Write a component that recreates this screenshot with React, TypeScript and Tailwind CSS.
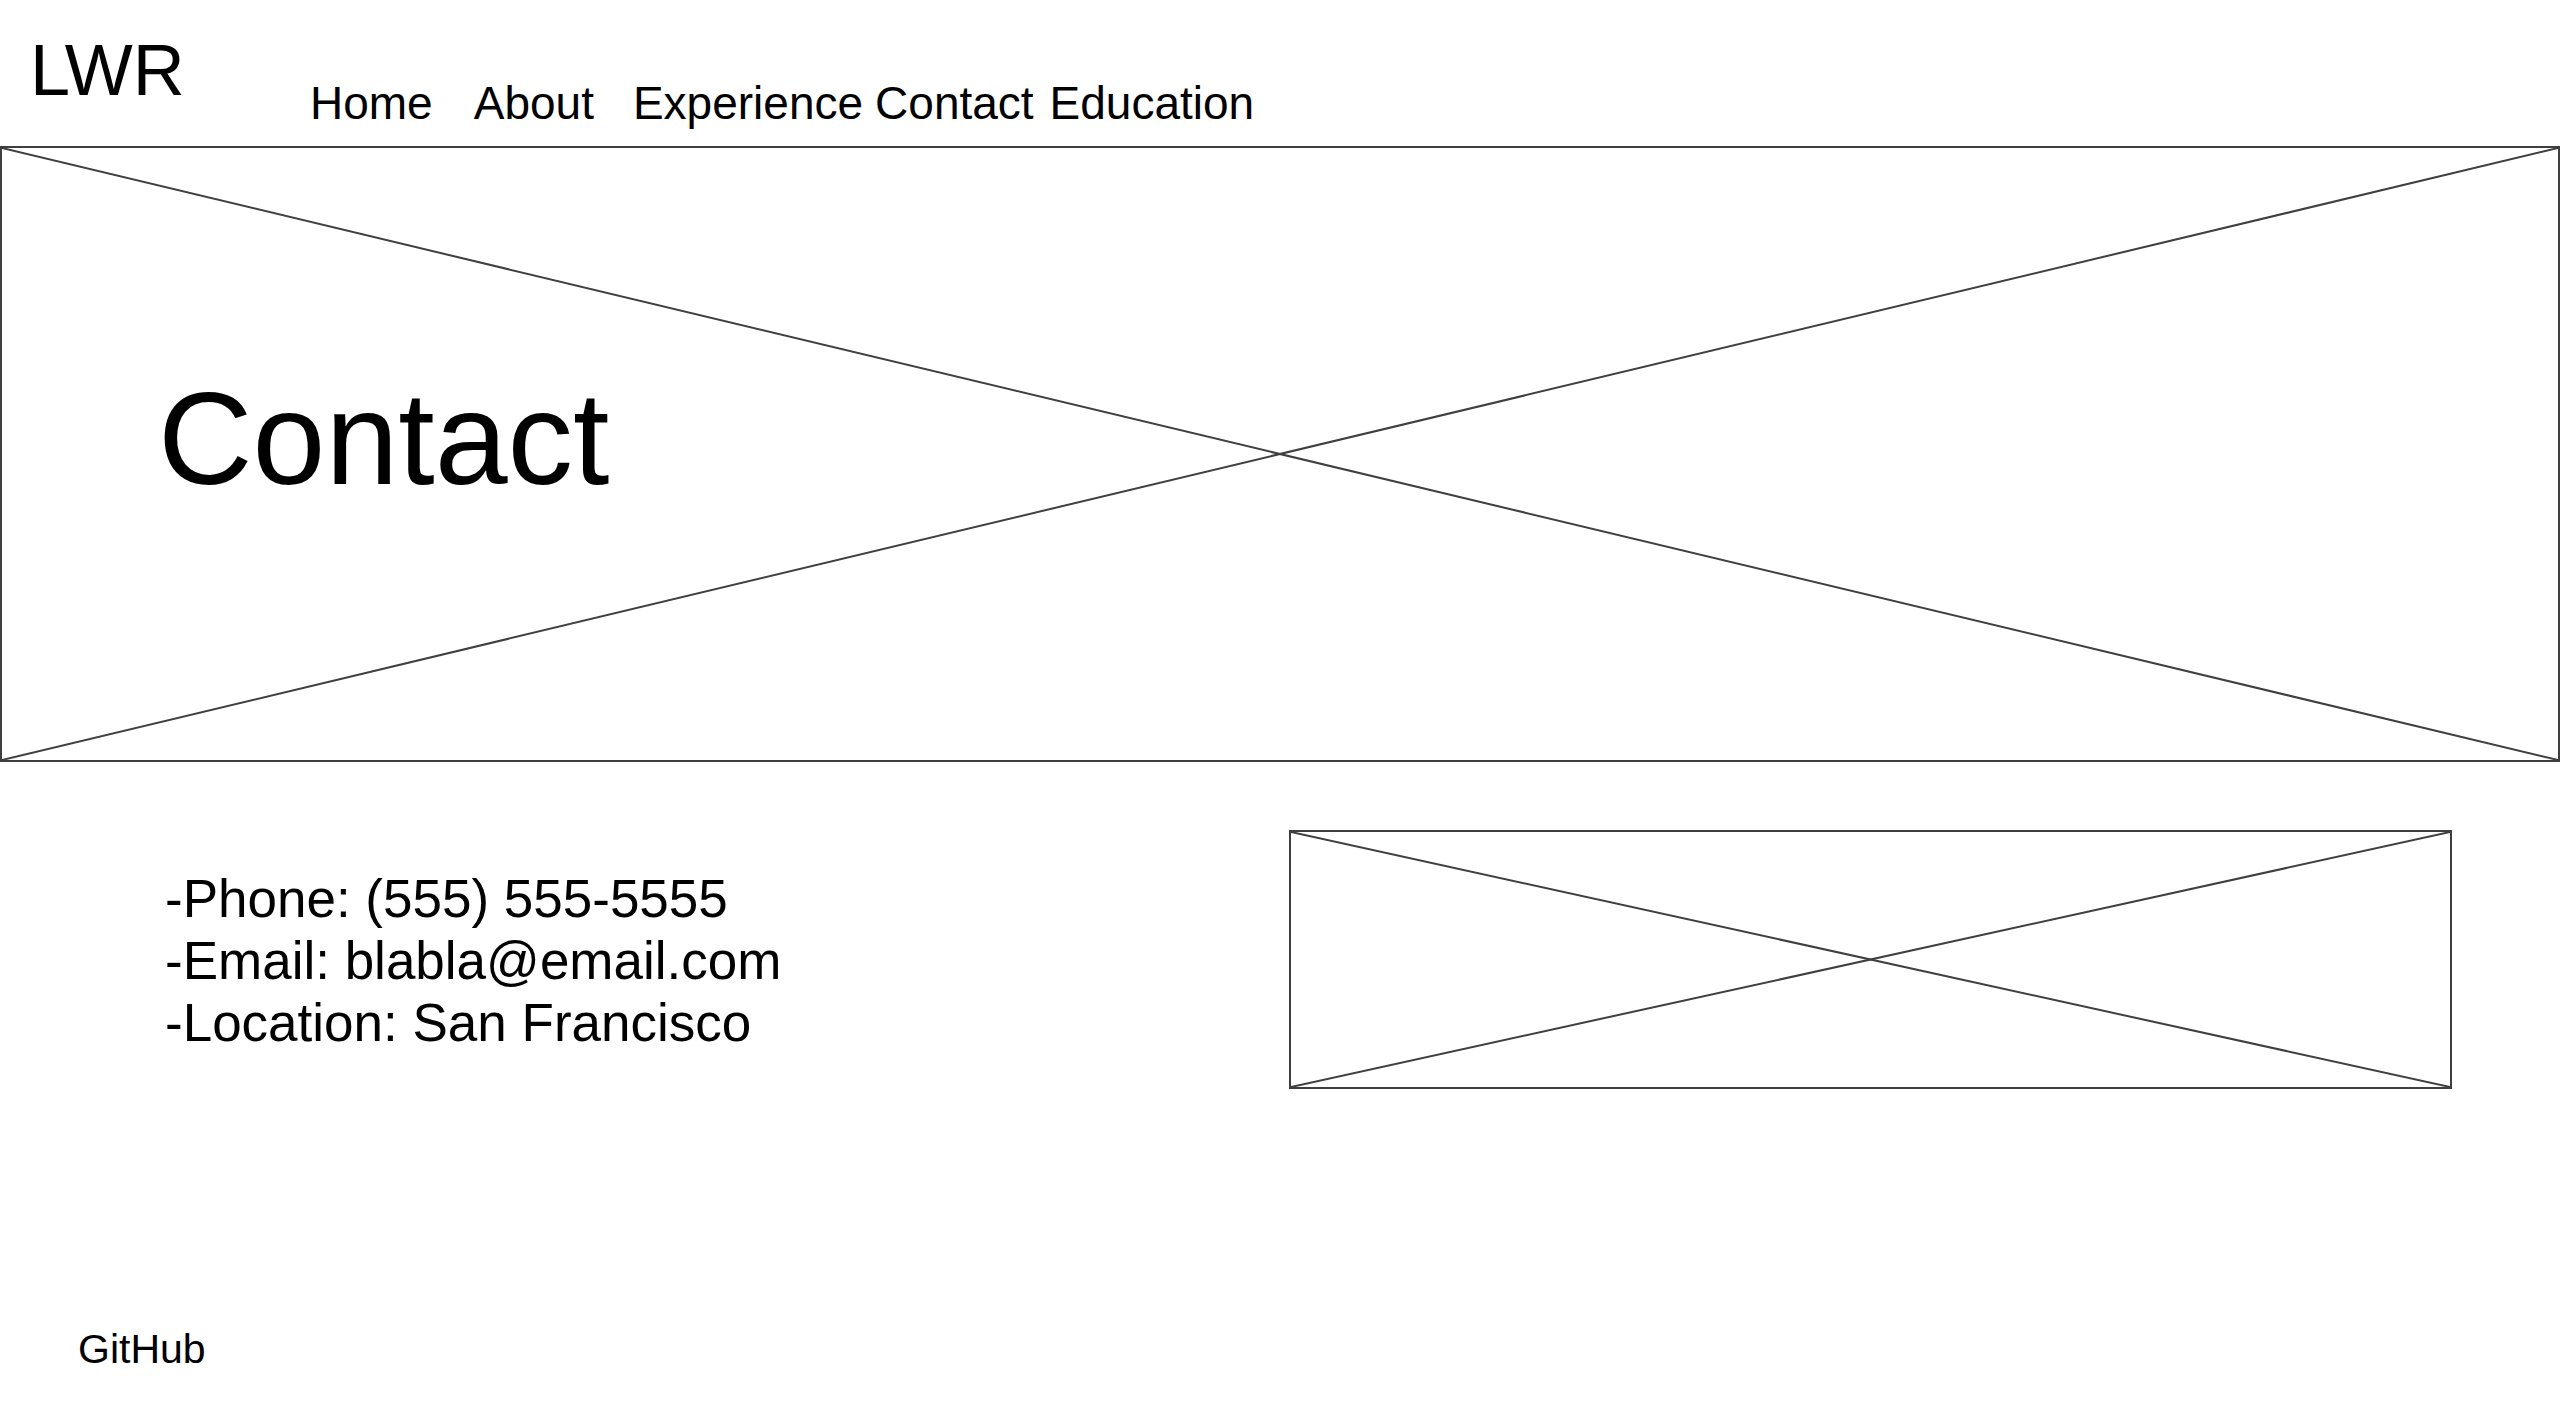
const font = { fontFamily: '"Liberation Sans", Arial, Helvetica, sans-serif' };

function Cross() {
    return (
        <svg className="absolute inset-0 h-full w-full" preserveAspectRatio="none" viewBox="0 0 100 100">
            <line x1="0" y1="0" x2="100" y2="100" stroke="#3f3f3f" strokeWidth="2" vectorEffect="non-scaling-stroke" />
            <line x1="0" y1="100" x2="100" y2="0" stroke="#3f3f3f" strokeWidth="2" vectorEffect="non-scaling-stroke" />
        </svg>
    );
}

export default function App() {
    return (
        <div className="w-[2560px] h-[1408px] bg-white text-black overflow-hidden" style={font}>
            <header className="h-[146px] flex items-start">
                <div className="w-[310px] pl-[30px] pt-[34px]">
                    <span className="text-[72px] leading-none">LWR</span>
                </div>
                <nav className="flex items-start pt-[80px] text-[46px] leading-none">
                    <a>Home</a>
                    <a className="ml-[41px]">About</a>
                    <a className="ml-[39px]">Experience</a>
                    <a className="ml-[12px]">Contact</a>
                    <a className="ml-[16px]">Education</a>
                </nav>
            </header>

            <section className="relative h-[616px] border-2 border-[#3f3f3f]">
                <Cross />
                <h1 className="relative pl-[156px] pt-[225px] text-[131px] leading-none font-normal">Contact</h1>
            </section>

            <div className="flex items-start">
                <div className="w-[1289px] shrink-0 pl-[165px] pt-[106px] text-[53px] leading-[62px]">
                    <p>-Phone: (555) 555-5555</p>
                    <p>-Email: blabla@email.com</p>
                    <p>-Location: San Francisco</p>
                </div>
                <div className="relative mt-[68px] w-[1163px] h-[259px] border-2 border-[#3f3f3f]">
                    <Cross />
                </div>
            </div>

            <footer className="pl-[78px] pt-[240px]">
                <a className="text-[41px] leading-none">GitHub</a>
            </footer>
        </div>
    );
}
